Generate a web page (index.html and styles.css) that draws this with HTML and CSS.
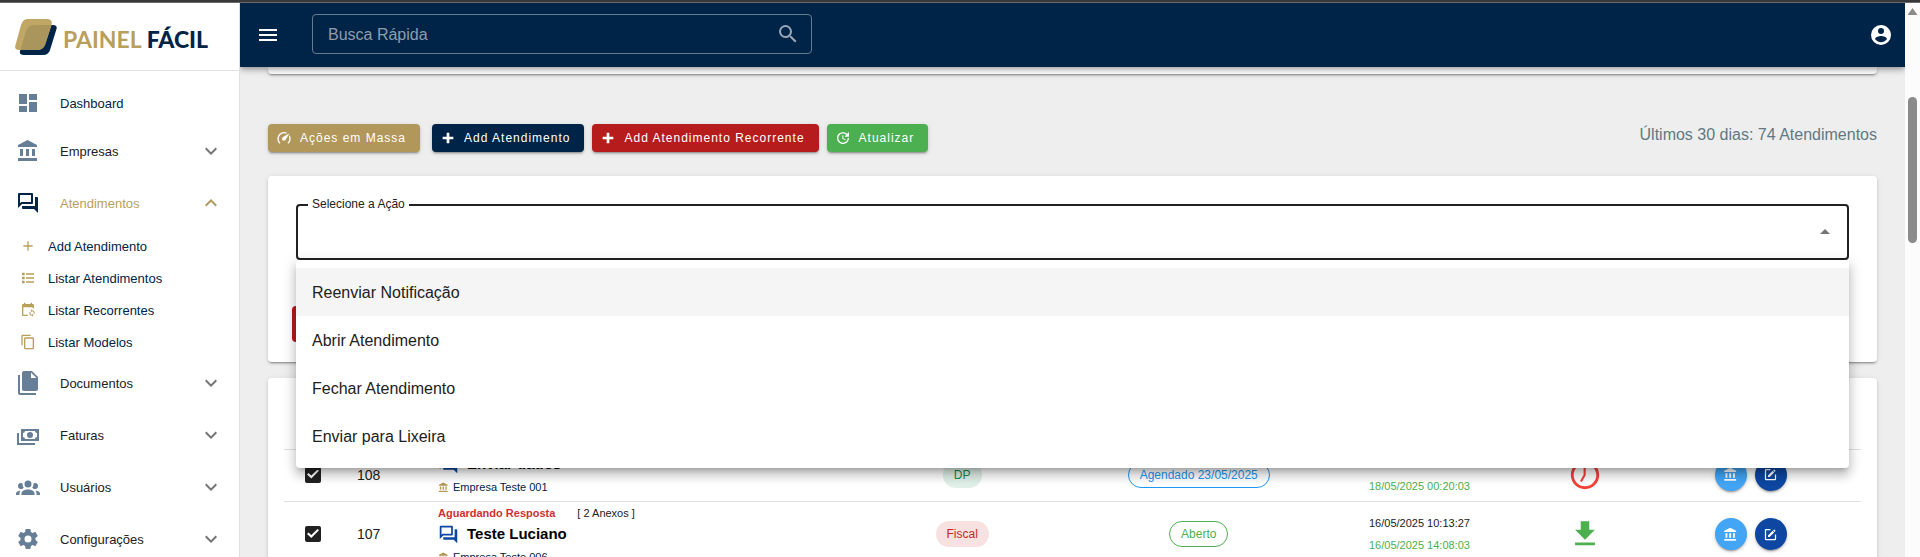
FILE: index.html
```html
<!DOCTYPE html>
<html lang="pt-BR">
<head>
<meta charset="utf-8">
<title>Painel Fácil</title>
<link rel="stylesheet" href="styles.css">
</head>
<body>
<svg class="sprite" aria-hidden="true">
  <symbol id="i-bank" viewBox="0 0 24 24"><path d="M11.5,1L2,6V8H21V6M16,10V17H19V10M2,22H21V19H2M10,10V17H13V10M4,10V17H7V10H4Z"/></symbol>
  <symbol id="i-forum" viewBox="0 0 24 24"><path d="M15,4V11H5.17L4,12.17V4H15M16,2H3A1,1 0 0,0 2,3V17L6,13H16A1,1 0 0,0 17,12V3A1,1 0 0,0 16,2M21,6H19V15H6V17A1,1 0 0,0 7,18H18L22,22V7A1,1 0 0,0 21,6Z"/></symbol>
  <symbol id="i-down" viewBox="0 0 24 24"><path d="M7.41,8.58L12,13.17L16.59,8.58L18,10L12,16L6,10L7.41,8.58Z"/></symbol>
  <symbol id="i-up" viewBox="0 0 24 24"><path d="M7.41,15.41L12,10.83L16.59,15.41L18,14L12,8L6,14L7.41,15.41Z"/></symbol>
  <symbol id="i-plus" viewBox="0 0 24 24"><path d="M20 14H14V20H10V14H4V10H10V4H14V10H20V14Z"/></symbol>
  <symbol id="i-edit" viewBox="0 0 24 24"><path d="M5,3C3.89,3 3,3.89 3,5V19A2,2 0 0,0 5,21H19A2,2 0 0,0 21,19V12H19V19H5V5H12V3H5M17.78,4C17.61,4 17.43,4.07 17.3,4.2L16.08,5.41L18.58,7.91L19.8,6.7C20.06,6.44 20.06,6 19.8,5.75L18.25,4.2C18.12,4.07 17.95,4 17.78,4M15.37,6.12L8,13.5V16H10.5L17.87,8.62L15.37,6.12Z"/></symbol>
</svg>
<div class="strip"></div>
<div class="shell">
  <aside class="sidebar">
    <a class="logo" href="#">
      <svg class="logo-mark" viewBox="0 0 42 36" aria-hidden="true">
        <path fill="#002447" d="M15 6H38Q42.500 6 41.500 10L35 31Q33.500 36 28 36H9Q4 36 5 32L11 10Q12 6 15 6Z"/>
        <path fill="#c0a766" d="M12 0H32Q38 0 36.500 6L30 26Q28 31 22 31H4Q-1 31 .5 26L6 6Q8 0 12 0Z"/>
        <path fill="#aa965c" d="M19 6H36.500L30 26Q28 31 22 31H5.300L11 12Q13 6 19 6Z"/>
      </svg>
      <span class="logo-text">PAINEL <b>FÁCIL</b></span>
    </a>
    <nav class="nav">
      <a class="item" href="#"><svg viewBox="0 0 24 24"><path d="M13,3V9H21V3M13,21H21V11H13M3,21H11V15H3M3,13H11V3H3V13Z"/></svg><span class="navy">Dashboard</span></a>
      <button class="item"><svg><use href="#i-bank"/></svg><span>Empresas</span><svg class="chev"><use href="#i-down"/></svg></button>
      <button class="item open spaced"><svg><use href="#i-forum"/></svg><span>Atendimentos</span><svg class="chev"><use href="#i-up"/></svg></button>
      <div class="subs">
        <a class="sub" href="#"><svg viewBox="0 0 24 24"><path d="M19,13H13V19H11V13H5V11H11V5H13V11H19V13Z"/></svg>Add Atendimento</a>
        <a class="sub" href="#"><svg viewBox="0 0 24 24"><path d="M3,4H7V8H3V4M9,5V7H21V5H9M3,10H7V14H3V10M9,11V13H21V11H9M3,16H7V20H3V16M9,17V19H21V17H9"/></svg>Listar Atendimentos</a>
        <a class="sub" href="#"><svg viewBox="0 0 24 24"><path d="M18 11V12.500C21.190 12.500 23.090 16.050 21.330 18.710L20.240 17.620C21.060 15.960 19.850 14 18 14V15.500L15.750 13.250L18 11M18 22V20.500C14.810 20.500 12.910 16.950 14.670 14.290L15.760 15.380C14.940 17.040 16.150 19 18 19V17.500L20.250 19.750L18 22M19 3H18V1H16V3H8V1H6V3H5C3.900 3 3 3.900 3 5V19C3 20.100 3.900 21 5 21H12.100C11.700 20.400 11.400 19.700 11.200 19H5V8H19V9C19.700 9.100 20.400 9.300 21 9.700V5C21 3.900 20.100 3 19 3"/></svg>Listar Recorrentes</a>
        <a class="sub" href="#"><svg viewBox="0 0 24 24"><path d="M19,21H8V7H19M19,5H8A2,2 0 0,0 6,7V21A2,2 0 0,0 8,23H19A2,2 0 0,0 21,21V7A2,2 0 0,0 19,5M16,1H4A2,2 0 0,0 2,3V17H4V3H16V1Z"/></svg>Listar Modelos</a>
      </div>
      <button class="item"><svg viewBox="0 0 24 24"><path d="M15,7H20.500L15,1.500V7M8,0H16L22,6V18A2,2 0 0,1 20,20H8C6.890,20 6,19.100 6,18V2A2,2 0 0,1 8,0M4,4V22H20V24H4A2,2 0 0,1 2,22V4H4Z"/></svg><span>Documentos</span><svg class="chev"><use href="#i-down"/></svg></button>
      <button class="item spaced"><svg viewBox="0 0 24 24"><path d="M5,6H23V18H5V6M14,9A3,3 0 0,1 17,12A3,3 0 0,1 14,15A3,3 0 0,1 11,12A3,3 0 0,1 14,9M9,8A2,2 0 0,1 7,10V14A2,2 0 0,1 9,16H19A2,2 0 0,1 21,14V10A2,2 0 0,1 19,8H9M1,10H3V20H19V22H1V10Z"/></svg><span>Faturas</span><svg class="chev"><use href="#i-down"/></svg></button>
      <button class="item spaced"><svg viewBox="0 0 24 24"><path d="M12,5.500A3.500,3.500 0 0,1 15.500,9A3.500,3.500 0 0,1 12,12.500A3.500,3.500 0 0,1 8.500,9A3.500,3.500 0 0,1 12,5.500M5,8C5.560,8 6.080,8.150 6.530,8.420C6.380,9.850 6.800,11.270 7.660,12.380C7.160,13.340 6.160,14 5,14A3,3 0 0,1 2,11A3,3 0 0,1 5,8M19,8A3,3 0 0,1 22,11A3,3 0 0,1 19,14C17.840,14 16.840,13.340 16.340,12.380C17.200,11.270 17.620,9.850 17.470,8.420C17.920,8.150 18.440,8 19,8M5.500,18.250C5.500,16.180 8.410,14.500 12,14.500C15.590,14.500 18.500,16.180 18.500,18.250V20H5.500V18.250M0,20V18.500C0,17.110 1.890,15.940 4.450,15.600C3.860,16.280 3.500,17.220 3.500,18.250V20H0M24,20H20.500V18.250C20.500,17.220 20.140,16.280 19.550,15.600C22.110,15.940 24,17.110 24,18.500V20Z"/></svg><span>Usuários</span><svg class="chev"><use href="#i-down"/></svg></button>
      <button class="item spaced"><svg viewBox="0 0 24 24"><path d="M12,15.500A3.500,3.500 0 0,1 8.500,12A3.500,3.500 0 0,1 12,8.500A3.500,3.500 0 0,1 15.500,12A3.500,3.500 0 0,1 12,15.500M19.430,12.970C19.470,12.650 19.500,12.330 19.500,12C19.500,11.670 19.470,11.340 19.430,11L21.540,9.370C21.730,9.220 21.780,8.950 21.660,8.730L19.660,5.270C19.540,5.050 19.270,4.960 19.050,5.050L16.560,6.050C16.040,5.660 15.500,5.320 14.870,5.070L14.500,2.420C14.460,2.180 14.250,2 14,2H10C9.750,2 9.540,2.180 9.500,2.420L9.130,5.070C8.500,5.320 7.960,5.660 7.440,6.050L4.950,5.050C4.730,4.960 4.460,5.050 4.340,5.270L2.340,8.730C2.210,8.950 2.270,9.220 2.460,9.370L4.570,11C4.530,11.340 4.500,11.670 4.500,12C4.500,12.330 4.530,12.650 4.570,12.970L2.460,14.630C2.270,14.780 2.210,15.050 2.340,15.270L4.340,18.730C4.460,18.950 4.730,19.030 4.950,18.950L7.440,17.940C7.960,18.340 8.500,18.680 9.130,18.930L9.500,21.580C9.540,21.820 9.750,22 10,22H14C14.250,22 14.460,21.820 14.500,21.580L14.870,18.930C15.500,18.670 16.040,18.340 16.560,17.940L19.050,18.950C19.270,19.030 19.540,18.950 19.660,18.730L21.660,15.270C21.780,15.050 21.730,14.780 21.540,14.630L19.430,12.970Z"/></svg><span>Configurações</span><svg class="chev"><use href="#i-down"/></svg></button>
    </nav>
  </aside>
  <div class="content">
    <header class="appbar">
      <button class="bar-btn" aria-label="Menu"><svg viewBox="0 0 24 24"><path d="M3,6H21V8H3V6M3,11H21V13H3V11M3,16H21V18H3V16Z"/></svg></button>
      <label class="search">
        <input type="text" placeholder="Busca Rápida" aria-label="Busca Rápida">
        <svg viewBox="0 0 24 24"><path d="M9.500,3A6.500,6.500 0 0,1 16,9.500C16,11.110 15.410,12.590 14.440,13.730L14.710,14H15.500L20.500,19L19,20.500L14,15.500V14.710L13.730,14.440C12.590,15.410 11.110,16 9.500,16A6.500,6.500 0 0,1 3,9.500A6.500,6.500 0 0,1 9.500,3M9.500,5C7,5 5,7 5,9.500C5,12 7,14 9.500,14C12,14 14,12 14,9.500C14,7 12,5 9.500,5Z"/></svg>
      </label>
      <button class="bar-btn account" aria-label="Conta"><svg viewBox="0 0 24 24"><path d="M12,19.200C9.500,19.200 7.290,17.920 6,16C6.030,14 10,12.900 12,12.900C14,12.900 17.970,14 18,16C16.710,17.920 14.500,19.200 12,19.200M12,5A3,3 0 0,1 15,8A3,3 0 0,1 12,11A3,3 0 0,1 9,8A3,3 0 0,1 12,5M12,2A10,10 0 0,0 2,12A10,10 0 0,0 12,22A10,10 0 0,0 22,12C22,6.470 17.500,2 12,2Z"/></svg></button>
    </header>
    <main class="main">
      <section class="card tail"></section>
      <div class="toolbar">
        <button class="btn gold"><svg viewBox="0 0 24 24"><path d="M12,16A3,3 0 0,1 9,13C9,11.880 9.610,10.900 10.500,10.390L20.210,4.770L14.680,14.350C14.180,15.330 13.170,16 12,16M12,3C13.810,3 15.500,3.500 16.970,4.320L14.870,5.530C14,5.190 13,5 12,5A8,8 0 0,0 4,13C4,15.210 4.890,17.210 6.340,18.650H6.350C6.740,19.040 6.740,19.670 6.350,20.060C5.960,20.450 5.320,20.450 4.930,20.070V20.070C3.120,18.260 2,15.760 2,13A10,10 0 0,1 12,3M22,13C22,15.760 20.880,18.260 19.070,20.070V20.070C18.680,20.450 18.050,20.450 17.660,20.060C17.270,19.670 17.270,19.040 17.660,18.650V18.650C19.110,17.200 20,15.210 20,13C20,12 19.810,11 19.460,10.100L20.670,8C21.500,9.500 22,11.180 22,13Z"/></svg>Ações em Massa</button>
        <button class="btn blue"><svg><use href="#i-plus"/></svg>Add Atendimento</button>
        <button class="btn red"><svg><use href="#i-plus"/></svg>Add Atendimento Recorrente</button>
        <button class="btn green"><svg viewBox="0 0 24 24"><path d="M21,10.120H14.220L16.960,7.300C14.230,4.600 9.810,4.500 7.080,7.200C4.350,9.910 4.350,14.280 7.080,17C9.810,19.700 14.230,19.700 16.960,17C18.320,15.650 19,14.080 19,12.100H21C21,14.080 20.120,16.650 18.360,18.390C14.850,21.870 9.150,21.870 5.640,18.390C2.140,14.920 2.110,9.280 5.620,5.810C9.130,2.340 14.760,2.340 18.270,5.810L21,3V10.120M12.500,8V12.250L16,14.330L15.280,15.540L11,13V8H12.500Z"/></svg>Atualizar</button>
        <span class="summary">Últimos 30 dias: 74 Atendimentos</span>
      </div>
      <section class="card action">
        <div class="field">
          <select id="acao" class="select"><option value=""></option></select>
          <label class="field-label" for="acao">Selecione a Ação</label>
          <svg class="caret" viewBox="0 0 24 24"><path d="M7,15L12,10L17,15H7Z"/></svg>
          <ul class="menu" role="listbox" aria-label="Selecione a Ação">
            <li class="active" role="option" aria-selected="true">Reenviar Notificação</li>
            <li role="option">Abrir Atendimento</li>
            <li role="option">Fechar Atendimento</li>
            <li role="option">Enviar para Lixeira</li>
          </ul>
        </div>
        <button class="run" aria-label="Executar"></button>
      </section>
      <section class="card list">
        <table class="table">
          <colgroup><col class="c-check"><col class="c-id"><col><col class="c-dept"><col class="c-status"><col class="c-dates"><col class="c-icon"><col class="c-actions"></colgroup>
          <tbody>
            <tr>
              <td class="check"><input type="checkbox" checked aria-label="Selecionar 108"></td>
              <td class="id">108</td>
              <td class="subject">
                <div class="title"><svg><use href="#i-forum"/></svg>Enviar dados</div>
                <div class="company"><svg><use href="#i-bank"/></svg>Empresa Teste 001</div>
              </td>
              <td><span class="chip dp">DP</span></td>
              <td><span class="chip scheduled">Agendado 23/05/2025</span></td>
              <td class="dates"><div>18/05/2025 00:20:03</div><div class="done">18/05/2025 00:20:03</div></td>
              <td><svg class="state late" viewBox="0 0 24 24"><path d="M12 20C16.400 20 20 16.400 20 12S16.400 4 12 4 4 7.600 4 12 7.600 20 12 20M12 2C17.500 2 22 6.500 22 12S17.500 22 12 22 2 17.500 2 12 6.500 2 12 2M12.500 7V12.200L9.800 17L8.500 16.200L11 11.800V7H12.500Z"/></svg></td>
              <td><div class="actions"><button class="round sky" aria-label="Empresa"><svg><use href="#i-bank"/></svg></button><button class="round deep" aria-label="Editar"><svg><use href="#i-edit"/></svg></button></div></td>
            </tr>
            <tr>
              <td class="check"><input type="checkbox" checked aria-label="Selecionar 107"></td>
              <td class="id">107</td>
              <td class="subject">
                <div class="flags"><b>Aguardando Resposta</b><span>[ 2 Anexos ]</span></div>
                <div class="title"><svg><use href="#i-forum"/></svg>Teste Luciano</div>
                <div class="company"><svg><use href="#i-bank"/></svg>Empresa Teste 006</div>
              </td>
              <td><span class="chip fiscal">Fiscal</span></td>
              <td><span class="chip opened">Aberto</span></td>
              <td class="dates"><div>16/05/2025 10:13:27</div><div class="done">16/05/2025 14:08:03</div></td>
              <td><svg class="state got" viewBox="0 0 24 24"><path d="M5,20H19V18H5M19,9H15V3H9V9H5L12,16L19,9Z"/></svg></td>
              <td><div class="actions"><button class="round sky" aria-label="Empresa"><svg><use href="#i-bank"/></svg></button><button class="round deep" aria-label="Editar"><svg><use href="#i-edit"/></svg></button></div></td>
            </tr>
          </tbody>
        </table>
      </section>
    </main>
  </div>
  <div class="scrollbar" aria-hidden="true"><span class="arrow"></span><span class="thumb"></span></div>
</div>
</body>
</html>
```
FILE: styles.css
```css
* { box-sizing: border-box; }
body {
  margin: 0;
  height: 100vh;
  overflow: hidden;
  display: flex;
  flex-direction: column;
  font-family: "Liberation Sans", Arial, sans-serif;
  font-size: 14px;
  color: #212121;
  background: #eeeeee;
}
button, input, select { font: inherit; color: inherit; margin: 0; }
button { border: 0; background: none; padding: 0; cursor: pointer; }
a { color: inherit; text-decoration: none; }
svg { fill: currentColor; display: block; flex: none; }
.sprite { position: absolute; width: 0; height: 0; }

.strip { flex: none; height: 3px; background: #383838; border-bottom: 1px solid #6a6a6a; }
.shell { flex: 1; min-height: 0; display: flex; }

/* Sidebar */
.sidebar { flex: none; width: 240px; background: #fff; border-right: 1px solid #e0e0e0; overflow: hidden; }
.logo {
  display: flex;
  align-items: center;
  height: 68px;
  padding: 0 15px;
  gap: 6px;
  border-bottom: 1px solid #e0e0e0;
}
.logo-mark { width: 42px; height: 36px; }
.logo-text { padding-top: 4px; font: 700 23px/32px Lato, sans-serif; color: #b89f5b; white-space: nowrap; }
.logo-text b { color: #002447; }
.nav { padding-top: 8px; font-size: 13px; }
.item {
  display: flex;
  align-items: center;
  gap: 20px;
  width: 100%;
  height: 48px;
  padding: 0 16px;
  text-align: left;
}
.item.spaced { margin-top: 4px; }
.item svg { width: 24px; height: 24px; color: #667e96; }
.item .navy { color: #002447; }
.item .chev { margin-left: auto; color: #757575; }
.item.open { color: #b89f5b; }
.item.open svg { color: #002447; }
.item.open .chev { color: #b1975a; }
.subs { padding: 3px 0 1px; }
.sub { display: flex; align-items: center; gap: 12px; height: 32px; padding-left: 20px; color: #002447; }
.sub svg { width: 16px; height: 16px; color: #b89f5b; }

/* App bar */
.content { flex: 1; min-width: 0; overflow: hidden; }
.appbar {
  position: relative;
  z-index: 2;
  display: flex;
  align-items: center;
  height: 64px;
  padding: 0 12px 0 16px;
  color: #fff;
  background: #002447;
  box-shadow: 0 2px 4px -1px rgba(0,0,0,.2), 0 4px 5px rgba(0,0,0,.14), 0 1px 10px rgba(0,0,0,.12);
}
.bar-btn svg { width: 24px; height: 24px; }
.account { margin-left: auto; }
.search {
  display: flex;
  align-items: center;
  width: 500px;
  height: 40px;
  margin-left: 32px;
  margin-bottom: 2px;
  padding: 0 11px 0 15px;
  border: 1px solid #667c91;
  border-radius: 4px;
  color: #99a7b5;
}
.search input { flex: 1; min-width: 0; border: 0; padding: 2px 0 0; outline: 0; background: none; font-size: 16px; color: #fff; }
.search input::placeholder { color: #8d9dad; opacity: 1; }
.search svg { width: 24px; height: 24px; }

/* Page */
.main { padding: 0 28px; }
.card { background: #fff; border-radius: 4px; box-shadow: 0 3px 1px -2px rgba(0,0,0,.2), 0 2px 2px rgba(0,0,0,.14), 0 1px 5px rgba(0,0,0,.12); }
.tail { height: 7px; border-radius: 0 0 4px 4px; }
.toolbar { display: flex; align-items: center; gap: 8px; padding: 50px 0 24px; }
.btn {
  display: flex;
  align-items: center;
  gap: 8px;
  height: 28px;
  padding: 0 14px 0 8px;
  border-radius: 4px;
  color: #fff;
  font-size: 12px;
  letter-spacing: 1px;
  white-space: nowrap;
  box-shadow: 0 3px 1px -2px rgba(0,0,0,.2), 0 2px 2px rgba(0,0,0,.14), 0 1px 5px rgba(0,0,0,.12);
}
.btn svg { width: 16px; height: 16px; }
.gold { background: #b1975a; margin-right: 4px; }
.blue { background: #002447; }
.red { background: #b71c1c; }
.green { background: #4caf50; }
.summary { margin-left: auto; align-self: flex-start; font-size: 16px; line-height: 22px; color: #607884; }

.action { padding: 28px 28px 20px; }
.field { position: relative; }
.select {
  display: block;
  width: 100%;
  height: 56px;
  border: 2px solid #212121;
  border-radius: 4px;
  background: #fff;
  appearance: none;
  outline: 0;
}
.field-label { position: absolute; left: 12px; top: -8px; padding: 0 4px; background: #fff; font-size: 12px; line-height: 16px; }
.caret { position: absolute; right: 12px; top: 15px; width: 24px; height: 24px; color: #757575; }
.menu {
  position: absolute;
  z-index: 1;
  top: 100%;
  left: 0;
  right: 0;
  margin: 0;
  padding: 8px 0;
  list-style: none;
  background: #fff;
  border-radius: 0 0 4px 4px;
  font-size: 16px;
  box-shadow: 0 5px 5px -3px rgba(0,0,0,.2), 0 8px 10px 1px rgba(0,0,0,.14), 0 3px 14px 2px rgba(0,0,0,.12);
}
.menu li { padding: 2px 16px 0; line-height: 46px; }
.menu .active { background: #f5f5f5; }
.run { display: block; width: 120px; height: 36px; margin: 46px 0 0 -4px; border-radius: 4px; background: #b71c1c; }

/* Tickets */
.list { margin-top: 16px; padding: 71px 16px 16px; }
.table { width: 100%; table-layout: fixed; border-collapse: separate; border-spacing: 0; }
.c-check { width: 57px; }
.c-id { width: 81px; }
.c-dept { width: 16%; }
.c-status { width: 14%; }
.c-dates { width: 14%; }
.c-icon { width: 7%; }
.c-actions { width: 14%; }
.table td { height: 52px; padding: 0 0 2px; border-top: 1px solid #e0e0e0; text-align: center; vertical-align: middle; }
.table .check { padding-left: 21px; text-align: left; }
.check input {
  appearance: none;
  display: block;
  position: relative;
  width: 16px;
  height: 16px;
  border-radius: 2px;
  background: #212121;
}
.check input::before {
  content: "";
  position: absolute;
  left: 2px;
  top: 3px;
  width: 12px;
  height: 9px;
  background: #fff;
  clip-path: polygon(0 55%, 12% 40%, 36% 68%, 88% 0, 100% 14%, 36% 100%);
}
.table .id { padding-left: 16px; text-align: left; }
.table .subject { padding: 2px 16px 0; text-align: left; vertical-align: top; }
.flags { display: flex; gap: 22px; font-size: 11px; line-height: 18px; }
.flags b { color: #d32f2f; }
.title { display: flex; align-items: center; gap: 8px; font-size: 15px; font-weight: 700; line-height: 24px; color: #000; }
.title svg { width: 21px; height: 21px; color: #0d47a1; }
.company { display: flex; align-items: center; gap: 4px; font-size: 11px; line-height: 22px; color: #002447; }
.company svg { width: 11px; height: 11px; color: #b1975a; }
.chip { display: inline-block; padding: 0 11px; border-radius: 13px; font-size: 12px; line-height: 26px; white-space: nowrap; vertical-align: middle; }
.dp { background: #e0f0e8; color: #1b8a4b; }
.fiscal { background: #f8e1e1; color: #c62828; }
.scheduled, .opened { border: 1px solid; line-height: 24px; }
.scheduled { color: #2196f3; }
.opened { color: #4caf50; }
.dates { font-size: 11px; line-height: 22px; }
.dates .done { color: #4caf50; }
.state { width: 34px; height: 34px; margin: 0 auto; }
.late { color: #f44336; }
.got { color: #4caf50; }
.actions { display: flex; justify-content: center; gap: 8px; }
.round {
  display: grid;
  place-items: center;
  width: 32px;
  height: 32px;
  border-radius: 50%;
  color: #fff;
  box-shadow: 0 3px 1px -2px rgba(0,0,0,.2), 0 2px 2px rgba(0,0,0,.14), 0 1px 5px rgba(0,0,0,.12);
}
.round svg { width: 15px; height: 15px; }
.sky { background: #42a5f5; }
.deep { background: #0d47a1; }

/* Scrollbar */
.scrollbar { flex: none; display: flex; flex-direction: column; align-items: center; width: 15px; padding-top: 5px; background: #fcfcfc; }
.arrow { width: 10px; height: 7px; background: #8b8b8b; clip-path: polygon(50% 0, 100% 100%, 0 100%); }
.thumb { width: 9px; height: 146px; margin-top: 82px; border-radius: 5px; background: #8b8b8b; }
```
